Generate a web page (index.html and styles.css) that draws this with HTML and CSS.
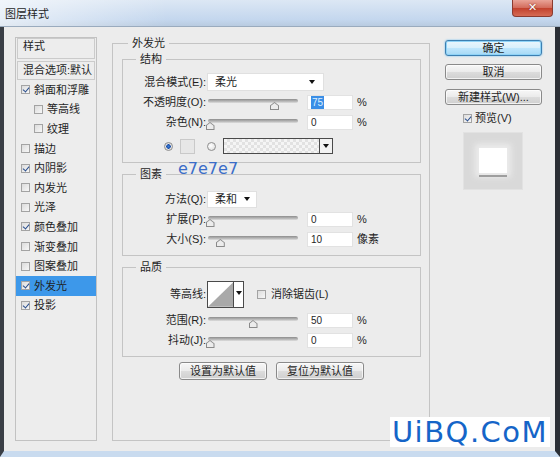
FILE: index.html
```html
<!DOCTYPE html>
<html lang="zh-CN">
<head>
    <meta charset="UTF-8">
    <title>图层样式</title>
    <link rel="stylesheet" href="styles.css">
</head>
<body>
    <div class="window">
        <div class="titlebar">
            <span class="title">图层样式</span>
            <span class="close">✕</span>
        </div>
        <div class="frame">
            <ul class="styles">
                <li class="head first">样式</li>
                <li class="head">混合选项:默认</li>
                <li class="item"><i class="cb on"></i>斜面和浮雕</li>
                <li class="item sub"><i class="cb"></i>等高线</li>
                <li class="item sub"><i class="cb"></i>纹理</li>
                <li class="item"><i class="cb"></i>描边</li>
                <li class="item"><i class="cb on"></i>内阴影</li>
                <li class="item"><i class="cb"></i>内发光</li>
                <li class="item"><i class="cb"></i>光泽</li>
                <li class="item"><i class="cb on"></i>颜色叠加</li>
                <li class="item"><i class="cb"></i>渐变叠加</li>
                <li class="item"><i class="cb"></i>图案叠加</li>
                <li class="item active"><i class="cb on"></i>外发光</li>
                <li class="item"><i class="cb on"></i>投影</li>
            </ul>

            <fieldset class="effect">
                <legend>外发光</legend>

                <fieldset class="group structure">
                    <legend>结构</legend>
                    <div class="row">
                        <span class="lbl">混合模式(E):</span>
                        <div class="select wide"><span>柔光</span><i class="arrow"></i></div>
                    </div>
                    <div class="row">
                        <span class="lbl">不透明度(O):</span>
                        <div class="slider" style="--v:75"><i class="thumb"></i></div>
                        <div class="field"><span class="picked">75</span></div>
                        <span class="unit">%</span>
                    </div>
                    <div class="row">
                        <span class="lbl">杂色(N):</span>
                        <div class="slider" style="--v:0"><i class="thumb"></i></div>
                        <div class="field">0</div>
                        <span class="unit">%</span>
                    </div>
                    <div class="row colors">
                        <i class="radio on"></i>
                        <span class="swatch"></span>
                        <i class="radio"></i>
                        <span class="gradient"><span class="fill"></span><span class="drop"><i class="arrow"></i></span></span>
                    </div>
                </fieldset>

                <fieldset class="group elements">
                    <legend>图素</legend>
                    <div class="row">
                        <span class="lbl">方法(Q):</span>
                        <div class="select narrow"><span>柔和</span><i class="arrow"></i></div>
                    </div>
                    <div class="row">
                        <span class="lbl">扩展(P):</span>
                        <div class="slider" style="--v:0"><i class="thumb"></i></div>
                        <div class="field">0</div>
                        <span class="unit">%</span>
                    </div>
                    <div class="row">
                        <span class="lbl">大小(S):</span>
                        <div class="slider" style="--v:12"><i class="thumb"></i></div>
                        <div class="field">10</div>
                        <span class="unit">像素</span>
                    </div>
                </fieldset>

                <fieldset class="group quality">
                    <legend>品质</legend>
                    <div class="row tall">
                        <span class="lbl">等高线:</span>
                        <span class="contour">
                            <svg width="26" height="25" viewBox="0 0 26 25"><polygon points="0,25 26,0 26,25" fill="#a9a9a9"/></svg>
                            <span class="drop"><i class="arrow"></i></span>
                        </span>
                        <i class="cb"></i>
                        <span>消除锯齿(L)</span>
                    </div>
                    <div class="row gap">
                        <span class="lbl">范围(R):</span>
                        <div class="slider" style="--v:50"><i class="thumb"></i></div>
                        <div class="field">50</div>
                        <span class="unit">%</span>
                    </div>
                    <div class="row">
                        <span class="lbl">抖动(J):</span>
                        <div class="slider" style="--v:0"><i class="thumb"></i></div>
                        <div class="field">0</div>
                        <span class="unit">%</span>
                    </div>
                </fieldset>

                <div class="defaults">
                    <button class="btn">设置为默认值</button>
                    <button class="btn">复位为默认值</button>
                </div>
            </fieldset>

            <div class="side">
                <button class="btn primary">确定</button>
                <button class="btn">取消</button>
                <button class="btn">新建样式(W)...</button>
                <div class="preview-check"><i class="cb on"></i>预览(V)</div>
                <div class="preview"><span class="square"></span></div>
            </div>
        </div>

        <span class="hint">e7e7e7</span>
        <div class="watermark">UiBQ.CoM</div>
    </div>
</body>
</html>
```

FILE: styles.css
```css
* {
    box-sizing: border-box;
}
body {
    margin: 0;
    width: 560px;
    height: 457px;
    overflow: hidden;
    font-family: "Liberation Sans", "Noto Sans CJK SC", sans-serif;
    font-size: 11px;
    line-height: 14px;
    color: #1f1f1f;
    background: #2d3138;
}
.window {
    position: relative;
    display: flex;
    flex-direction: column;
    height: 457px;
}
.titlebar {
    flex: none;
    height: 27px;
    display: flex;
    justify-content: space-between;
    padding-left: 5px;
    background: linear-gradient(90deg, rgba(255,255,255,0.6), rgba(255,255,255,0) 30%),
                linear-gradient(180deg, #dce7f4, #c4d7ee 75%, #b9cbe0);
    border-bottom: 1px solid #9aabbe;
}
.title {
    margin-top: 7px;
}
.close {
    width: 41px;
    height: 17px;
    margin-right: 7px;
    border: 1px solid #8b3b30;
    border-top: none;
    border-radius: 0 0 4px 4px;
    background: linear-gradient(180deg, #e9a397, #d26a5a 50%, #c2412d 51%, #d56b55);
    color: #fff;
    font-size: 11px;
    line-height: 15px;
    text-align: center;
    text-shadow: 0 0 2px #6b1c12;
}
.frame {
    flex: 1;
    display: flex;
    gap: 15px;
    padding: 10px 13px 10px 11px;
    background: #ececec;
    border-left: 4px solid #3a3f46;
    border-right: 5px solid #2b2f35;
    border-bottom: 6px solid #c9dbef;
}

/* style list */
.styles {
    width: 82px;
    margin: 0;
    padding: 0;
    list-style: none;
    border: 1px solid #c2c2c2;
    background: #ededed;
}
.styles .head {
    height: 19px;
    margin: 0 1px;
    padding-left: 5px;
    border: 1px solid #cbcbcb;
    line-height: 17px;
    white-space: nowrap;
}
.styles .head.first {
    height: 21px;
    margin-bottom: 2px;
    line-height: 15px;
}
.styles .item {
    display: flex;
    align-items: center;
    gap: 4px;
    height: 19.6px;
    padding-left: 5px;
}
.styles .sub {
    padding-left: 18px;
}
.styles .active {
    background: #3d98ea;
}

/* checkbox and radio */
.cb {
    position: relative;
    flex: none;
    display: inline-block;
    width: 9px;
    height: 9px;
    border: 1px solid #a3a3a3;
    background: linear-gradient(135deg, #dcdcdc, #f7f7f7);
}
.cb.on::after {
    content: "";
    position: absolute;
    left: 2px;
    top: 0;
    width: 3px;
    height: 5px;
    border-right: 1.5px solid #2a4f8e;
    border-bottom: 1.5px solid #2a4f8e;
    transform: rotate(40deg);
}
.radio {
    flex: none;
    display: inline-block;
    width: 9px;
    height: 9px;
    border: 1px solid #8e8e8e;
    border-radius: 50%;
    background: radial-gradient(circle at 40% 40%, #fff, #dadada);
}
.radio.on {
    background: radial-gradient(circle, #3b7fd8 0, #1c4fa8 2px, #e8e8e8 2.5px, #d0d0d0);
}

/* group boxes */
.effect {
    width: 318px;
    min-width: 0;
    margin: 0;
    padding: 0 8px 0 9px;
    border: 1px solid #c4c4c4;
}
.effect > legend {
    margin-left: 6px;
    padding: 0 4px;
    line-height: 13px;
}
.group {
    min-width: 0;
    margin: 4px 0 0;
    padding: 0 0 6px;
    border: 1px solid #c4c4c4;
}
.group legend {
    margin-left: 13px;
    padding: 0 4px;
    line-height: 14px;
}
.structure {
    margin-top: 2px;
    padding-top: 6px;
}
.elements {
    padding-top: 8px;
}
.quality {
    padding-top: 6px;
}

.row {
    display: flex;
    align-items: center;
    height: 20px;
}
.row.tall {
    height: 28px;
}
.row.gap {
    margin-top: 2px;
}
.lbl {
    flex: none;
    width: 83px;
    text-align: right;
    white-space: nowrap;
}
.unit {
    padding-left: 4px;
}

.select {
    display: flex;
    align-items: center;
    justify-content: space-between;
    height: 18px;
    margin-left: 1px;
    padding: 0 8px 0 7px;
    background: #fff;
    border: 1px solid #e0e0e0;
}
.select.wide {
    width: 117px;
}
.select.narrow {
    width: 50px;
    height: 17px;
    padding-right: 6px;
}
.arrow {
    display: inline-block;
    width: 0;
    height: 0;
    border-left: 3px solid transparent;
    border-right: 3px solid transparent;
    border-top: 4px solid #111;
}

.slider {
    position: relative;
    flex: none;
    width: 90px;
    height: 20px;
    margin: 0 9px 0 2px;
}
.slider::before {
    content: "";
    position: absolute;
    left: 0;
    right: 0;
    top: 7px;
    height: 4px;
    border-radius: 2px;
    background: linear-gradient(180deg, #8d8d8d, #b9b9b9 60%, #dedede);
}
.thumb {
    position: absolute;
    top: 10px;
    left: calc(var(--v) * 0.86px - 2.5px);
    width: 9px;
    height: 8px;
    background: #8a8a8a;
    clip-path: polygon(50% 0, 100% 45%, 100% 100%, 0 100%, 0 45%);
}
.thumb::after {
    content: "";
    position: absolute;
    inset: 1px;
    background: #ececec;
    clip-path: polygon(50% 0, 100% 45%, 100% 100%, 0 100%, 0 45%);
}

.field {
    flex: none;
    width: 46px;
    height: 15px;
    padding-left: 3px;
    background: #fff;
    border: 1px solid #e2e2e2;
    font-size: 10px;
    line-height: 13px;
}
.picked {
    display: inline-block;
    padding: 0 1px;
    background: #3a8ee6;
    color: #dff0ff;
}

.colors {
    margin-top: 4px;
    padding-left: 41px;
}
.swatch {
    width: 15px;
    height: 15px;
    margin: 0 12px 0 7px;
    background: #e7e7e7;
    border: 1px solid #c9c9c9;
}
.gradient {
    display: flex;
    width: 110px;
    height: 16px;
    margin-left: 7px;
    border: 1px solid #4a4a4a;
}
.gradient .fill {
    flex: 1;
    background-color: #f5f5f5;
    background-image: linear-gradient(45deg, #e2e2e2 25%, transparent 25%, transparent 75%, #e2e2e2 75%),
                      linear-gradient(45deg, #e2e2e2 25%, transparent 25%, transparent 75%, #e2e2e2 75%);
    background-size: 6px 6px;
    background-position: 0 0, 3px 3px;
}
.drop {
    display: flex;
    align-items: center;
    justify-content: center;
    width: 13px;
    border-left: 1px solid #4a4a4a;
    background: #f2f2f2;
}

.contour {
    display: flex;
    width: 37px;
    height: 27px;
    margin-left: 1px;
    border: 1px solid #4a4a4a;
    background: #fff;
}
.contour svg {
    display: block;
}
.contour .drop {
    width: 10px;
    align-items: flex-start;
    padding-top: 9px;
    background: #fff;
}
.tall .cb {
    margin: 0 5px 0 13px;
}

/* buttons */
.btn {
    height: 18px;
    padding: 0;
    font-family: inherit;
    font-size: 11px;
    line-height: 14px;
    color: #1f1f1f;
    border: 1px solid #8a8a8a;
    border-radius: 3px;
    background: linear-gradient(180deg, #f7f7f7, #ebebeb 48%, #dcdcdc 52%, #cfcfcf);
    box-shadow: inset 0 0 0 1px rgba(255,255,255,0.7);
}
.defaults {
    display: flex;
    justify-content: center;
    gap: 9px;
    margin-top: 5px;
}
.defaults .btn {
    width: 88px;
}

.side {
    width: 97px;
    display: flex;
    flex-direction: column;
    padding-top: 3px;
}
.side .btn {
    height: 16px;
    margin-bottom: 8px;
}
.side .btn:nth-child(2) {
    margin-bottom: 9px;
}
.btn.primary {
    border-color: #3c7fb1;
    background: linear-gradient(180deg, #eaf6fd, #d9f0fc 48%, #bee6fd 52%, #a7d9f5);
    box-shadow: inset 0 0 0 1px #8fd3f7, 0 0 2px #5fb7ef;
}
.preview-check {
    display: flex;
    align-items: center;
    gap: 3px;
    height: 12px;
    margin-top: -1px;
    padding-left: 18px;
}
.preview {
    display: flex;
    align-items: center;
    justify-content: center;
    width: 60px;
    height: 58px;
    margin: 8px 0 0 18px;
    background: #d9d9d9;
    border: 1px solid #e2e2e2;
}
.square {
    position: relative;
    width: 28px;
    height: 25px;
    margin-top: -1px;
    background: #fff;
    box-shadow: 0 0 6px 4px #ececec;
}
.square::after {
    content: "";
    position: absolute;
    left: 0;
    right: 0;
    bottom: -4px;
    height: 2px;
    background: #9e9e9e;
    filter: blur(0.6px);
}

/* overlays */
.hint {
    position: absolute;
    left: 178px;
    top: 161px;
    font-family: "DejaVu Sans", sans-serif;
    font-size: 16px;
    line-height: 16px;
    color: #3a6cc8;
}
.watermark {
    position: absolute;
    left: 390px;
    top: 417px;
    width: 160px;
    height: 30px;
    background: #fff;
    color: #1565c8;
    font-family: "DejaVu Sans", sans-serif;
    font-size: 29px;
    line-height: 30px;
    letter-spacing: 1.5px;
    text-align: center;
}
```
